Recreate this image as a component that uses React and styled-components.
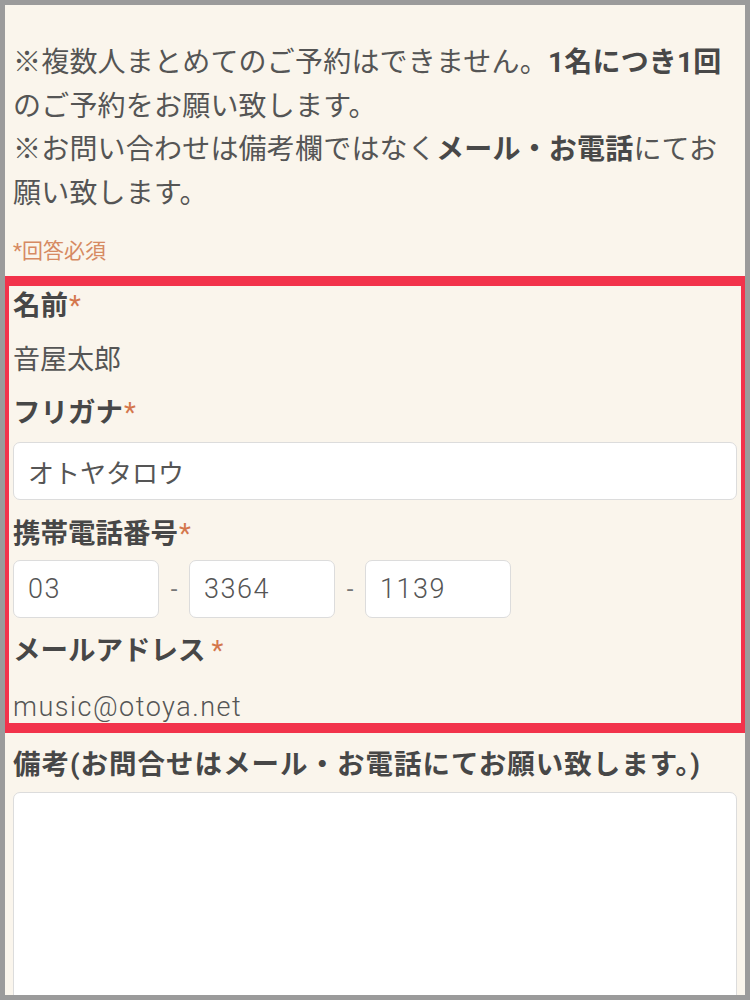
import React from "react";
import styled, { createGlobalStyle } from "styled-components";

const Global = createGlobalStyle`
  html, body { margin: 0; padding: 0; background: #9b9b9b; }
  body { font-family: Roboto, "Noto Sans CJK JP", sans-serif; }
  * { box-sizing: border-box; }
`;

const Page = styled.div`
  margin: 5px;
  height: 990px;
  overflow: hidden;
  background: #faf5ec;
  padding: 36px 8px 0;
  color: #555;
`;

const Notice = styled.p`
  margin: 0;
  font-size: 28px;
  line-height: 43.5px;
  color: #555;
  white-space: nowrap;
  letter-spacing: 0.2px;
`;

const Strong = styled.b`
  font-weight: 700;
  color: #484848;
`;

const Required = styled.div`
  margin-top: 21px;
  font-size: 21px;
  line-height: 30px;
  color: #d68a62;
`;

const Highlight = styled.section`
  margin: 10px -8px 0;
  border-style: solid;
  border-color: #f2334b;
  border-width: 10px 4px;
  padding: 0 4px;
  display: flex;
  flex-direction: column;
`;

const Label = styled.div`
  margin-top: ${(p) => p.$mt || 0}px;
  font-size: 27.5px;
  line-height: 40px;
  font-weight: 700;
  letter-spacing: ${(p) => p.$ls || 0}px;
  color: #474747;
  white-space: nowrap;
`;

const Star = styled.span`
  color: #d4774c;
  font-weight: 400;
  margin-left: ${(p) => p.$gap || 1}px;
`;

const Value = styled.div`
  margin-top: ${(p) => p.$mt || 0}px;
  font-size: 27px;
  line-height: ${(p) => p.$lh || 40}px;
  font-weight: ${(p) => (p.$latin ? 300 : 400)};
  letter-spacing: ${(p) => (p.$latin ? "1.5px" : "0")};
  color: #555;
`;

const TextInput = styled.input`
  display: block;
  margin-top: ${(p) => p.$mt || 0}px;
  width: ${(p) => p.$w || "100%"};
  height: 58px;
  padding: 0 14px;
  border: 1.5px solid #dcdcdc;
  border-radius: 7px;
  background: #fff;
  font-family: Roboto, "Noto Sans CJK JP", sans-serif;
  font-size: ${(p) => (p.$latin ? 27 : 26)}px;
  font-weight: ${(p) => (p.$latin ? 300 : 400)};
  letter-spacing: ${(p) => (p.$latin ? "1.5px" : "0")};
  color: #555;
  outline: none;
`;

const PhoneRow = styled.div`
  margin-top: 6px;
  display: flex;
  align-items: center;
`;

const Dash = styled.span`
  width: 30px;
  text-align: center;
  font-size: 24px;
  color: #777;
`;

const TextArea = styled.textarea`
  display: block;
  margin-top: 7px;
  width: 100%;
  height: 260px;
  border: 1.5px solid #dcdcdc;
  border-radius: 7px;
  background: #fff;
  resize: none;
  outline: none;
`;

export default function App() {
  return (
    <>
      <Global />
      <Page>
        <Notice>
          ※複数人まとめてのご予約はできません。<Strong>1名につき1回</Strong>
          <br />
          のご予約をお願い致します。
          <br />
          ※お問い合わせは備考欄ではなく<Strong>メール・お電話</Strong>にてお
          <br />
          願い致します。
        </Notice>
        <Required>*回答必須</Required>

        <Highlight>
          <Label>
            名前<Star>*</Star>
          </Label>
          <Value $mt={14}>音屋太郎</Value>

          <Label $mt={13}>
            フリガナ<Star>*</Star>
          </Label>
          <TextInput $mt={9} readOnly defaultValue="オトヤタロウ" />

          <Label $mt={14}>
            携帯電話番号<Star>*</Star>
          </Label>
          <PhoneRow>
            <TextInput $latin $w="146px" readOnly defaultValue="03" />
            <Dash>-</Dash>
            <TextInput $latin $w="146px" readOnly defaultValue="3364" />
            <Dash>-</Dash>
            <TextInput $latin $w="146px" readOnly defaultValue="1139" />
          </PhoneRow>

          <Label $mt={13}>
            メールアドレス<Star $gap={6}>*</Star>
          </Label>
          <Value $latin $mt={21} $lh={31}>music@otoya.net</Value>
        </Highlight>

        <Label $mt={12} $ls={1}>備考(お問合せはメール・お電話にてお願い致します。)</Label>
        <TextArea readOnly />
      </Page>
    </>
  );
}
